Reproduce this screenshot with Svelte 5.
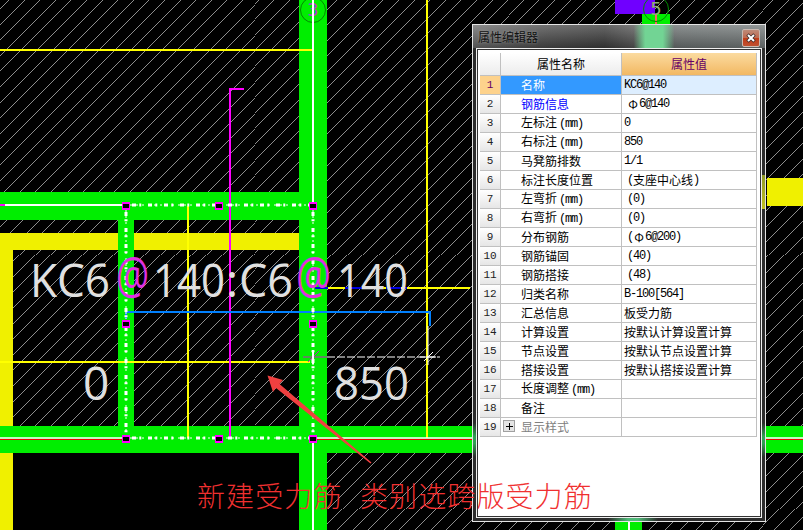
<script>
	const hatch = [];
	for (let k = -26; k < 60; k++) hatch.push(Math.round(398 + k * 15.6));

	const markers = [[126, 205], [219, 205], [313, 205], [126, 323], [313, 323], [126, 438], [219, 438], [313, 438]];

	const rows = [
		['名称', 'KC6@140'],
		['钢筋信息', ' Φ6@140'],
		['左标注(mm)', '0'],
		['右标注(mm)', '850'],
		['马凳筋排数', '1/1'],
		['标注长度位置', ' (支座中心线)'],
		['左弯折(mm)', ' (0)'],
		['右弯折(mm)', ' (0)'],
		['分布钢筋', ' (Φ6@200)'],
		['钢筋锚固', ' (40)'],
		['钢筋搭接', ' (48)'],
		['归类名称', 'B-100[564]'],
		['汇总信息', '板受力筋'],
		['计算设置', '按默认计算设置计算'],
		['节点设置', '按默认节点设置计算'],
		['搭接设置', '按默认搭接设置计算'],
		['长度调整(mm)', ''],
		['备注', ''],
		['显示样式', '']
	];

	// latin runs are set narrower so they sit at half the width of a CJK char
	function runs(text) {
		return text.trim().split(/([\x20-\x7e]+|Φ)/).filter(Boolean).map((t) => ({
			t,
			lat: /^[\x20-\x7e]/.test(t),
			rebar: t === 'Φ'
		}));
	}
</script>

<svg class="canvas" viewBox="0 0 803 530" width="803" height="530">
	<rect width="803" height="530" fill="#000" />
	<g class="hatch">
		{#each hatch as c}
			<line x1={c + 0.5} y1="0" x2={c - 529.5} y2="530" />
		{/each}
	</g>
	<rect x="0" y="452" width="299" height="78" fill="#000" />

	<!-- yellow walls -->
	<rect x="0" y="233" width="299" height="17" fill="#f0f000" />
	<rect x="0" y="233" width="13" height="297" fill="#f0f000" />
	<rect x="767" y="178" width="36" height="28" fill="#f0f000" />

	<!-- green beams -->
	<rect x="299" y="0" width="28" height="530" fill="#00ee00" />
	<rect x="0" y="192" width="299" height="28" fill="#00ee00" />
	<rect x="0" y="426" width="803" height="27" fill="#00ee00" />
	<rect x="118" y="220" width="16" height="206" fill="#00ee00" />
	<rect x="615" y="0" width="40" height="14" fill="#7000ff" />
	<rect x="642" y="14" width="28" height="12" fill="#00ee00" />
	<rect x="615" y="522" width="27" height="8" fill="#00ee00" />
	<rect x="628" y="522" width="2" height="8" fill="#fff" />
	<rect x="655" y="14" width="2" height="10" fill="#ff6060" />

	<!-- axis bubbles -->
	<circle cx="313" cy="10" r="12.5" fill="none" stroke="#008a00" />
	<text x="313" y="16" class="axis" fill="#b040d0">3</text>
	<circle cx="656" cy="9" r="12.5" fill="none" stroke="#008a00" />
	<text x="656" y="15" class="axis" fill="#90b070">5</text>

	<!-- thin yellow lines -->
	<g stroke="#ffff00" stroke-width="2" fill="none">
		<path d="M0 50H313" />
		<path d="M188 206V438" />
		<path d="M427 0V438" />
		<path d="M0 362H310" />
		<path d="M316 288H470" />
	</g>
	<path d="M315 288H328M345 288H381M386 288H401M405 288H407" stroke="#0000e0" stroke-width="2" />

	<!-- magenta bar -->
	<path d="M244 89H230V438" stroke="#ff00ff" stroke-width="2" fill="none" />

	<!-- blue outline -->
	<path d="M126 319V312H430V326" stroke="#0080ff" stroke-width="2" fill="none" />

	<!-- rebar lines -->
	<path d="M0 205H122" stroke="#fff" stroke-width="2" />
	<rect x="0" y="204" width="5" height="2" fill="#ff00ff" />
	<path d="M313 0V202" stroke="#fff" stroke-width="2" />
	<path d="M313 442V530" stroke="#fff" stroke-width="2" />
	<path d="M0 438H122M317 438H803" stroke="#fff" stroke-width="1.5" />
	<path d="M0 439.5H122M317 439.5H803" stroke="#f00000" stroke-width="1" />
	<g stroke="#fff" fill="none">
		<path d="M130 205H309M130 438H309M126 210V319M126 327V434M313 210V319M313 327V434" stroke-width="1" stroke-dasharray="2 4" />
		<path d="M132 205H309M132 438H309M126 212V319M126 327V434M313 212V319M313 327V434" stroke-width="3" stroke-dasharray="4 3.3 2 6.7" />
	</g>

	<!-- dimension line and cross marks -->
	<path d="M303 357H327" stroke="#c020c0" />
	<path d="M327 357H440" stroke="#fff" stroke-dasharray="8 2" />
	<path d="M428 326V365" stroke="#fff" />
	<path d="M308 362L319 351" stroke="#c020c0" />
	<path d="M313 350V364" stroke="#fff" stroke-width="2" />
	<path d="M424 361L433 352M420 357H436" stroke="#fff" />

	{#each markers as [x, y]}
		<rect x={x - 4} y={y - 3} width="8" height="8" fill="#ff00ff" />
		<rect x={x - 3} y={y - 1} width="6" height="4" fill="#000" />
	{/each}

	<!-- dimension texts -->
	<text class="big" x="30" y="297" textLength="80" lengthAdjust="spacingAndGlyphs">KC6</text>
	<text class="big at" x="116" y="294" textLength="33" lengthAdjust="spacingAndGlyphs">@</text>
	<text class="big" x="153" y="297" textLength="72" lengthAdjust="spacingAndGlyphs">140</text>
	<text class="big" x="226" y="297">:</text>
	<text class="big" x="239" y="297" textLength="54" lengthAdjust="spacingAndGlyphs">C6</text>
	<text class="big at" x="296" y="294" textLength="35" lengthAdjust="spacingAndGlyphs">@</text>
	<text class="big" x="337" y="297" textLength="71" lengthAdjust="spacingAndGlyphs">140</text>
	<text class="big" x="83" y="400">0</text>
	<text class="big" x="334" y="400" textLength="75" lengthAdjust="spacingAndGlyphs">850</text>
</svg>

<div class="window">
	<div class="title">
		<span>属性编辑器</span>
		<button class="close" aria-label="关闭">
			<svg viewBox="0 0 10 10" width="10" height="10">
				<path d="M1.5 1.5L8.5 8.5M8.5 1.5L1.5 8.5" stroke="#3a2a2a" stroke-width="3.4" />
				<path d="M2 2L8 8M8 2L2 8" stroke="#fff" stroke-width="2" />
			</svg>
		</button>
	</div>
	<div class="client">
		<div class="grid">
			<div class="cell corner"></div>
			<div class="cell head">属性名称</div>
			<div class="cell head val">属性值</div>
			{#each rows as [name, value], i}
				<div class="cell num" class:on={i === 0}>{i + 1}</div>
				<div class="cell name" class:sel={i === 0} class:link={i === 1} class:muted={i === 18}>
					{#if i === 18}<span class="plus"></span>{/if}
					<span class="label">{#each runs(name) as r}<span class:lat={r.lat}>{r.t}</span>{/each}</span>
				</div>
				<div class="cell value" class:cur={i === 0} class:ind={value.startsWith(' ')}>{#each runs(value) as r}<span class:lat={r.lat} class:rebar={r.rebar}>{r.t}</span>{/each}</div>
			{/each}
		</div>
	</div>
</div>

<svg class="overlay" viewBox="0 0 803 530" width="803" height="530">
	<polygon points="267.5,375.5 283,380 279.5,384 371.5,462.5 370.5,463.5 276,388 273,392" fill="#f04040" />
	<text class="note" x="197" y="507">新建受力筋</text>
	<text class="note" x="360" y="507">类别选跨版受力筋</text>
</svg>

<style>
	:global(body) { background: #000; overflow: hidden; }

	.canvas, .overlay { position: absolute; left: 0; top: 0; display: block; }
	.overlay { pointer-events: none; }
	.hatch line { stroke: #b0b0b0; stroke-width: 0.8; shape-rendering: crispEdges; }

	.axis { font-family: "DejaVu Sans", sans-serif; font-size: 18px; text-anchor: middle; }
	.big { font-family: "Open Sans", sans-serif; font-size: 46px; fill: #e0e0e0; }
	.big.at { fill: #e030e0; font-size: 52px; }
	.note { font-family: "Noto Sans CJK SC", sans-serif; font-size: 28px; fill: #f03030; letter-spacing: 1.1px; font-weight: 300; }

	.window {
		position: absolute; left: 472px; top: 24px;
		width: 294px; height: 498px; box-sizing: border-box;
		display: flex; flex-direction: column;
		padding: 0 3px 3px;
		border: 1px solid #e4e4e4;
		background:
			linear-gradient(180deg, transparent, #2fa052 40%, #2fa052 60%, transparent) 0 398px / 3px 34px no-repeat,
			linear-gradient(180deg, transparent, #2fa052 40%, #2fa052 60%, transparent) 100% 398px / 3px 34px no-repeat,
			linear-gradient(180deg, #8f9a2a, #c0c020) 100% 150px / 3px 34px no-repeat,
			linear-gradient(90deg, transparent, #50b878 40%, #50b878 60%, transparent) 135px 100% / 50px 3px no-repeat,
			#2c2c2c;
	}
	.title {
		height: 23px; flex: none; margin: 0 -3px;
		display: flex; align-items: center; justify-content: space-between;
		padding: 0 5px 0 5px;
		font: 12px "Noto Sans CJK SC", sans-serif;
		color: #111;
		background:
			linear-gradient(90deg, transparent 55%, #72d494 59%, #72d494 65%, transparent 69%),
			linear-gradient(180deg, rgba(255, 255, 255, 0.22), rgba(0, 0, 0, 0.22)),
			linear-gradient(90deg, #6a6a6a, #4a4a4a 25%, #3c3c3c 45%, #585858 56%, #6c7272 70%, #747a7a);
	}
	.title span { text-shadow: 0 0 3px rgba(255, 255, 255, 0.4); }
	.close {
		width: 18px; height: 18px; padding: 0; margin-top: 3px;
		display: flex; align-items: center; justify-content: center;
		border: 1px solid #c8b8b0; border-radius: 2px;
		background: linear-gradient(180deg, #bd8a78, #c06a50 48%, #c03c18 52%, #c05030);
	}
	.close svg { display: block; }

	.client {
		flex: 1;
		border: 1px solid #f0f0f0;
		box-shadow: inset 0 0 0 1px #333;
		background: #fff;
		padding: 4px 0 0 3px;
	}

	.grid {
		display: grid;
		grid-template-columns: 21px 121px 135px;
		grid-auto-rows: 19px;
		grid-template-rows: 23px;
		font: 12px/18px "Noto Sans CJK SC", sans-serif;
		color: #000;
	}
	.cell {
		box-sizing: border-box;
		border-right: 1px solid #c0c0c0; border-bottom: 1px solid #c0c0c0;
		display: flex; align-items: center;
		white-space: pre; overflow: hidden;
	}
	.corner, .head { background: linear-gradient(180deg, #fff, #ececec); }
	.head { justify-content: center; }
	.head.val { background: linear-gradient(180deg, #fbdba0, #f2b862); color: #660066; font-size: 12px; }
	.num {
		justify-content: center;
		background: linear-gradient(180deg, #fff, #e6e6e6);
		color: #222;
		font: 11px "Liberation Mono", monospace;
	}
	.num.on { background: #fdd28c; color: #660066; }
	.name { padding-left: 20px; position: relative; }
	.name.sel { background: #3399ff; color: #fff; }
	.name.link { color: #0000ff; }
	.name.muted { color: #808080; }
	.name .lat { padding-left: 2px; }
	.value { padding-left: 2px; }
	.value.ind { padding-left: 5px; }
	.value.cur { background: #ddeeff; }
	.lat { font-family: "Liberation Mono", monospace; letter-spacing: -1.2px; }
	.rebar { display: inline-block; width: 12px; text-align: center; }
	.plus {
		position: absolute; left: 2px; top: 2px;
		width: 12px; height: 12px; box-sizing: border-box;
		border: 1px solid #a0a0a0;
		background:
			linear-gradient(#000, #000) center / 7px 1px no-repeat,
			linear-gradient(#000, #000) center / 1px 7px no-repeat,
			#e4e4e4;
	}
</style>
